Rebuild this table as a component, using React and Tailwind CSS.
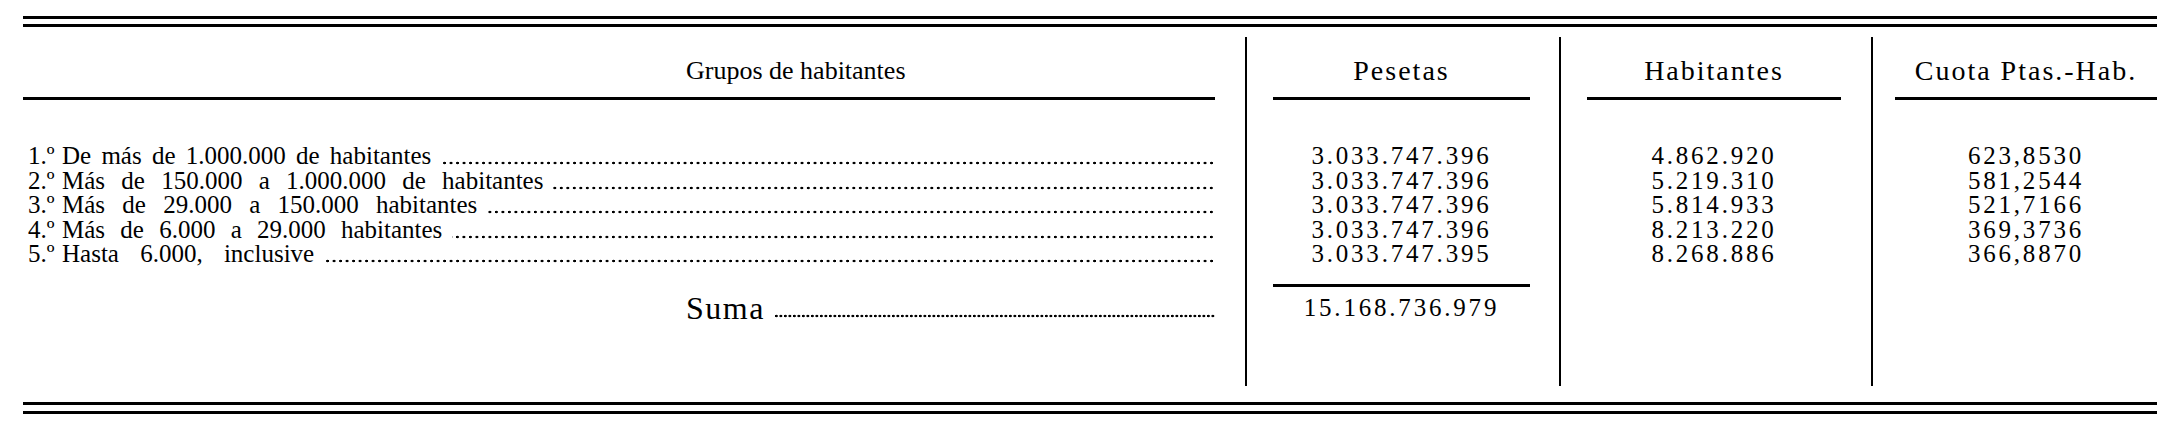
const rows = [
  { n: '1.º', label: 'De más de 1.000.000 de habitantes', ws: '[word-spacing:4px]', pts: '3.033.747.396', hab: '4.862.920', cuota: '623,8530' },
  { n: '2.º', label: 'Más de 150.000 a 1.000.000 de habitantes', ws: '[word-spacing:10px]', pts: '3.033.747.396', hab: '5.219.310', cuota: '581,2544' },
  { n: '3.º', label: 'Más de 29.000 a 150.000 habitantes', ws: '[word-spacing:11px]', pts: '3.033.747.396', hab: '5.814.933', cuota: '521,7166' },
  { n: '4.º', label: 'Más de 6.000 a 29.000 habitantes', ws: '[word-spacing:9px]', pts: '3.033.747.396', hab: '8.213.220', cuota: '369,3736' },
  { n: '5.º', label: 'Hasta 6.000, inclusive', ws: '[word-spacing:15px]', pts: '3.033.747.395', hab: '8.268.886', cuota: '366,8870' },
]

// dotted leader drawn as a repeating dot, anchored to the right edge
function Leader({ className }) {
  return (
    <div
      className={`ml-[10px] h-[4px] min-w-0 flex-1 self-start bg-right bg-repeat-x bg-[radial-gradient(circle,#000_1.1px,transparent_1.6px)] ${className}`}
    />
  )
}

function NumberColumn({ title, values, total, pad }) {
  return (
    <div className={`flex flex-col border-l-2 border-black ${pad}`}>
      <div className="flex h-[60px] items-center justify-center pt-[8px] text-[28px] leading-none tracking-[2px]">{title}</div>
      <div className="h-[3px] bg-black" />
      <div className="mt-[43.75px] text-[25px] leading-[24px] tracking-[2.8px]">
        {values.map((v, i) => (
          <div key={i} className="flex h-[24.5px] items-center justify-center">
            <span>{v}</span>
          </div>
        ))}
      </div>
      {total ? (
        <>
          <div className="mt-[18px] h-[3px] bg-black" />
          <div className="mt-[8.5px] flex h-[24.5px] items-center justify-center text-[25px] leading-[24px] tracking-[2.8px]">
            <span>{total}</span>
          </div>
        </>
      ) : null}
    </div>
  )
}

export default function App() {
  return (
    <div className="h-[433px] w-[2163px] overflow-hidden bg-white pl-[23px] pr-[6px] pt-[16px] font-['Liberation_Serif',serif] text-black">
      <div className="h-[11px] border-y-[3px] border-black" />

      <div className="mt-[10px] flex h-[349px]">
        <div className="flex w-[1222px] flex-col pr-[30px]">
          <div className="flex h-[60px] items-center pl-[663px] pt-[8px] text-[26px] leading-none">Grupos de habitantes</div>
          <div className="h-[3px] bg-black" />
          <div className="mt-[43.75px] text-[25px] leading-[24px]">
            {rows.map((r) => (
              <div key={r.n} className="flex h-[24.5px] items-center pl-[5px]">
                <span className="w-[34px] shrink-0">{r.n}</span>
                <span className={`shrink-0 whitespace-nowrap ${r.ws}`}>{r.label}</span>
                <Leader className="mt-[17.5px] bg-[length:6.5px_4px]" />
              </div>
            ))}
          </div>
          <div className="mt-[29.5px] flex h-[24.5px] items-center pl-[663px] text-[32px] leading-[24px] tracking-[1.5px]">
            <span className="shrink-0">Suma</span>
            <Leader className="mt-[18.5px] bg-[length:4.5px_4px]" />
          </div>
        </div>

        <NumberColumn
          title="Pesetas"
          values={rows.map((r) => r.pts)}
          total="15.168.736.979"
          pad="w-[314px] pl-[26px] pr-[29px]"
        />
        <NumberColumn title="Habitantes" values={rows.map((r) => r.hab)} pad="w-[312px] pl-[26px] pr-[30px]" />
        <NumberColumn title="Cuota Ptas.-Hab." values={rows.map((r) => r.cuota)} pad="flex-1 pl-[22px]" />
      </div>

      <div className="mt-[16px] h-[12px] border-y-[3px] border-black" />
    </div>
  )
}
